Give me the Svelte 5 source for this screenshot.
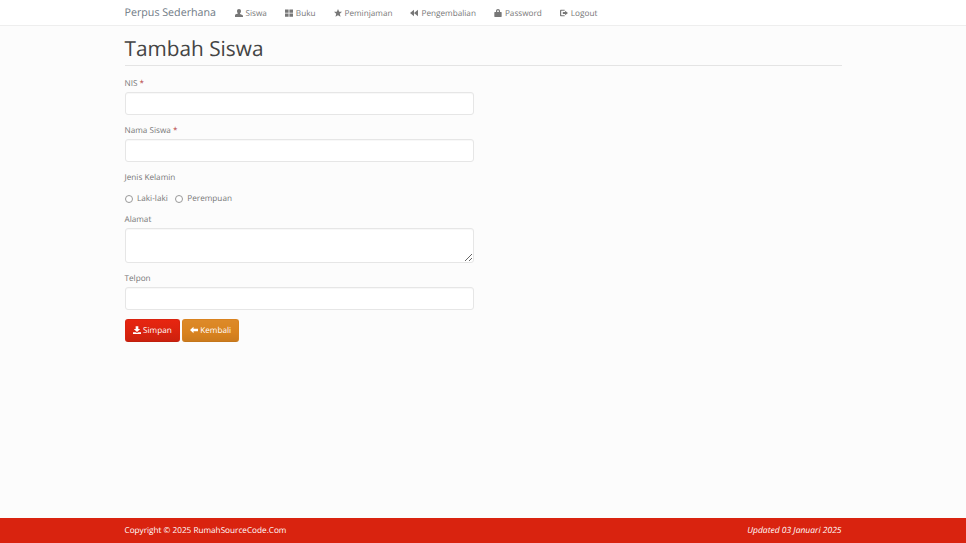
<script>
  const menu = [
    { label: 'Siswa', icon: 'user' },
    { label: 'Buku', icon: 'th' },
    { label: 'Peminjaman', icon: 'star' },
    { label: 'Pengembalian', icon: 'back' },
    { label: 'Password', icon: 'lock' },
    { label: 'Logout', icon: 'logout' }
  ];
</script>

{#snippet icon(name)}
  <svg class="icon" viewBox="0 0 12 12" width="8" height="8" aria-hidden="true">
    {#if name === 'user'}
      <path d="M6 0c1.900 0 3 1.300 3 3.200 0 1.400-.6 2.500-1.400 3.200v1.200l3.400 1.300c.6.300 1 .8 1 1.400V12H0v-2.700c0-.6.400-1.100 1-1.400l3.400-1.300V6.400C3.600 5.700 3 4.600 3 3.200 3 1.300 4.100 0 6 0z" />
    {:else if name === 'th'}
      <path d="M0 .8h5.400v4.800H0zM6.600.8H12v4.800H6.600zM0 6.800h5.400v4.800H0zM6.600 6.800H12v4.800H6.600z" />
    {:else if name === 'star'}
      <path d="M6 0l1.800 4H12L8.700 7l1.100 4.600L6 9.200l-3.800 2.400L3.300 7 0 4h4.200z" />
    {:else if name === 'back'}
      <path d="M0 6l6-5v10zM6 6l6-5v10z" />
    {:else if name === 'lock'}
      <path d="M3 4.600V3.200C3 1.300 4.200 0 6 0s3 1.300 3 3.200v1.400h1.800c.4 0 .7.300.7.700v6c0 .4-.3.700-.7.700H1.200c-.4 0-.7-.3-.7-.7v-6c0-.4.300-.7.700-.7zm1.800 0h2.400V3.200c0-.9-.3-1.400-1.200-1.400s-1.200.5-1.200 1.400z" />
    {:else if name === 'logout'}
      <path d="M1.600 1.200h5.400v1.600H2.400c-.3 0-.6.300-.6.600v5.200c0 .3.300.6.600.6H7v1.600H1.600C.7 10.800 0 10.100 0 9.200V2.800C0 1.900.7 1.200 1.600 1.200zM7.600 2.800L12 6 7.600 9.200V7.400H4.200V4.600h3.400z" />
    {:else if name === 'save'}
      <path d="M4 .4h4v4.200h2.800L6 9 1.200 4.600H4zM0 9.200h3.800L6 10.400l2.200-1.200H12V12H0z" />
    {:else if name === 'left'}
      <path d="M0 6l5.300-4.800v3h6.700v3.600H5.300v3z" />
    {/if}
  </svg>
{/snippet}

<nav class="navbar">
  <div class="container nav-inner">
    <a class="brand" href="#top">Perpus Sederhana</a>
    <ul class="menu">
      {#each menu as item}
        <li>
          <a href="#top">{@render icon(item.icon)} {item.label}</a>
        </li>
      {/each}
    </ul>
  </div>
</nav>

<main class="container">
  <h1>Tambah Siswa</h1>

  <form class="form">
    <div class="group">
      <label for="nis">NIS <span class="req">*</span></label>
      <input id="nis" type="text" />
    </div>
    <div class="group">
      <label for="nama">Nama Siswa <span class="req">*</span></label>
      <input id="nama" type="text" />
    </div>
    <div class="group">
      <div class="label gender">Jenis Kelamin</div>
      <div class="radios">
        <label><input type="radio" name="jk" /> Laki-laki</label>
        <label><input type="radio" name="jk" /> Perempuan</label>
      </div>
    </div>
    <div class="group">
      <label for="alamat">Alamat</label>
      <textarea id="alamat"></textarea>
    </div>
    <div class="group">
      <label for="telpon">Telpon</label>
      <input id="telpon" type="text" />
    </div>
    <div class="actions">
      <button type="button" class="btn red">{@render icon('save')} Simpan</button>
      <button type="button" class="btn orange">{@render icon('left')} Kembali</button>
    </div>
  </form>
</main>

<footer>
  <div class="container foot-inner">
    <span>Copyright © 2025 RumahSourceCode.Com</span>
    <em>Updated 03 Januari 2025</em>
  </div>
</footer>

<style>
  :global(body) { margin: 0; background: #fcfcfc; }
  :global(#app) {
    display: flex;
    flex-direction: column;
    height: 543px;
    overflow: hidden;
    font-family: "Open Sans", "Noto Sans", sans-serif;
    font-size: 8.2px;
    color: #777;
    text-rendering: geometricPrecision;
  }
  .container { width: 717px; margin: 0 auto 0 124.5px; }

  .navbar { height: 25px; background: #fff; border-bottom: 1px solid #eee; flex-shrink: 0; }
  .nav-inner { display: flex; align-items: center; height: 24px; padding-top: 1px; }
  .brand { font-size: 10.7px; color: #6f7a85; text-decoration: none; width: 110px; flex-shrink: 0; }
  .menu { display: flex; list-style: none; margin: 0; padding: 0; gap: 18px; }
  .menu a { color: #777; text-decoration: none; display: flex; align-items: center; gap: 3px; }
  .icon { fill: currentColor; display: inline-block; flex-shrink: 0; margin-top: -1px; }

  main { flex: 1; }
  h1 {
    font-size: 20.8px;
    font-weight: 400;
    color: #444;
    line-height: 28px;
    margin: 9px 0 0;
    padding-bottom: 2px;
    border-bottom: 1px solid #e4e4e4;
  }
  .form { width: 349px; margin-top: 11px; }
  .group { margin-bottom: 9px; }
  .group > label, .label { display: block; line-height: 12px; padding-top: 1px; margin-bottom: 2px; color: #777; }
  .req { color: #b94a48; }
  input[type="text"], textarea {
    display: block;
    width: 100%;
    box-sizing: border-box;
    height: 23px;
    background: #fff;
    border: 1px solid #e6e6e6;
    border-radius: 3px;
    padding: 0 8px;
    margin: 0;
    font: inherit;
    box-shadow: inset 0 1px 1px rgba(0, 0, 0, .03);
  }
  textarea { height: 35px; resize: vertical; }
  .label.gender { margin-bottom: 8px; }
  .radios { display: flex; gap: 7px; height: 13px; }
  .radios label { display: flex; align-items: center; gap: 4.5px; }
  input[type="radio"] {
    appearance: none;
    box-sizing: border-box;
    width: 8px;
    height: 8px;
    margin: 0;
    background: #fff;
    border: 1px solid #999;
    border-radius: 50%;
  }
  .group:has(.radios) { margin-bottom: 8px; }
  .actions { display: flex; gap: 2px; }
  .btn {
    display: flex;
    align-items: center;
    gap: 2.5px;
    height: 23px;
    padding: 0 7px;
    border: 1px solid;
    border-radius: 3px;
    color: #fff;
    font: inherit;
    text-rendering: inherit;
  }
  .red { background: linear-gradient(#e72510, #d9230f 60%, #cb210e); border-color: #d9230f #d9230f #c01f0d; }
  .orange { background: linear-gradient(#dd8a29, #d9831f 60%, #cc7b1d); border-color: #d9831f #d9831f #c4761b; }

  footer { height: 25px; background: #d9230f; color: #fff; flex-shrink: 0; }
  .foot-inner { display: flex; justify-content: space-between; align-items: center; height: 25px; }
  .foot-inner em { font-size: 8.5px; }
</style>
